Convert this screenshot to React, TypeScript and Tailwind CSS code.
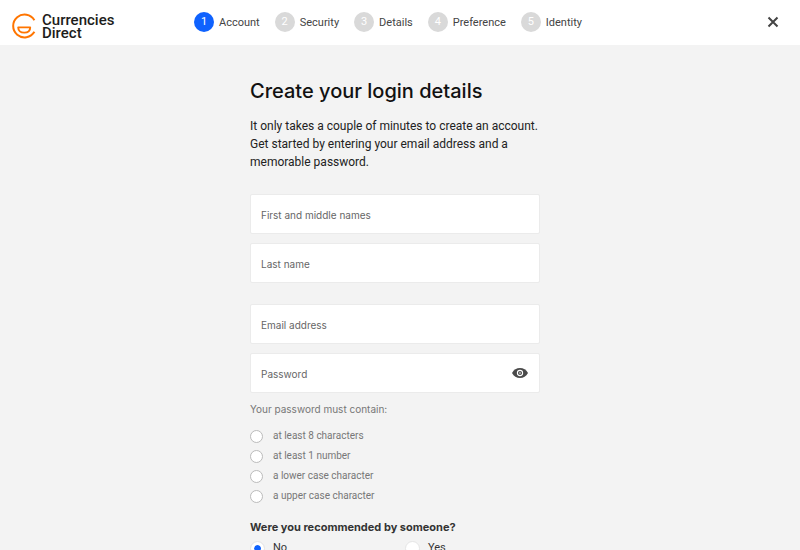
import { useState } from "react";
import clsx from "clsx";

const steps = ["Account", "Security", "Details", "Preference", "Identity"];

const passwordRules = [
  "at least 8 characters",
  "at least 1 number",
  "a lower case character",
  "a upper case character",
];

function Logo() {
  return (
    <a href="#" className="flex items-center gap-[6px] text-[#1d1d1b]">
      <svg width="24" height="26" viewBox="0 0 24 26" fill="none" stroke="#ff7500">
        <path d="M22.4 7.2A11.4 11.4 0 1 0 22.4 18.8" strokeWidth="2" />
        <path
          d="M6.2 14.4H18.2C18.2 17.6 15.8 19.6 12.2 19.6S6.2 17.6 6.2 14.4Z"
          strokeWidth="1.9"
          strokeLinejoin="round"
        />
      </svg>
      <span className="flex flex-col pt-[2px] text-[15px] leading-[13px] font-medium">
        <span>Currencies</span>
        <span>Direct</span>
      </span>
    </a>
  );
}

function Header() {
  return (
    <header className="flex h-[45px] items-center bg-white pr-[21px] pb-[2px] pl-3">
      <div className="w-[182px] pt-2">
        <Logo />
      </div>
      <ol className="flex flex-1 items-center gap-[15px]">
        {steps.map((step, i) => (
          <li key={step} className="flex items-center gap-[5px]">
            <span
              className={clsx(
                "flex size-5 items-center justify-center rounded-full pt-px text-[11px] text-white",
                i === 0 ? "bg-[#0f62fe]" : "bg-[#d9d9d9]"
              )}
            >
              {i + 1}
            </span>
            <span className="pt-[3px] text-[11px] text-[#444]">{step}</span>
          </li>
        ))}
      </ol>
      <button type="button" aria-label="Close">
        <svg width="12" height="12" viewBox="0 0 12 12" stroke="#444" strokeWidth="2">
          <path d="M1.5 1.5L10.5 10.5M10.5 1.5L1.5 10.5" />
        </svg>
      </button>
    </header>
  );
}

function Field({ label, type = "text" }: { label: string; type?: string }) {
  return (
    <input
      type={type}
      aria-label={label}
      placeholder={label}
      className="h-10 w-full rounded-xs border border-[#ebebeb] bg-white px-[10px] pt-[2px] font-['Inter','Liberation_Sans',sans-serif] text-[10px] text-[#333] outline-none placeholder:text-[#666]"
    />
  );
}

export default function App() {
  const [showPassword, setShowPassword] = useState(false);
  const [recommended, setRecommended] = useState("No");

  return (
    <div className="min-h-screen bg-[#f3f3f3] font-['Roboto','Liberation_Sans',sans-serif]">
      <Header />
      <main className="px-4 pt-8 pr-[26px] pb-10">
        <form className="mx-auto max-w-[290px]">
          <h1 className="font-['Inter','Liberation_Sans',sans-serif] text-xl leading-7 font-medium text-[#111]">
            Create your login details
          </h1>
          <p className="mt-3 text-xs leading-[18px] text-[#222]">
            It only takes a couple of minutes to create an account. Get started
            by entering your email address and a memorable password.
          </p>

          <div className="mt-[23px] flex flex-col gap-[9px]">
            <Field label="First and middle names" />
            <Field label="Last name" />
          </div>
          <div className="mt-[21px] flex flex-col gap-[9px]">
            <Field label="Email address" type="email" />
            <div className="relative">
              <Field label="Password" type={showPassword ? "text" : "password"} />
              <button
                type="button"
                aria-label="Show password"
                className="absolute inset-y-0 right-3 flex items-center"
                onClick={() => setShowPassword(!showPassword)}
              >
                <svg width="16" height="10" viewBox="0 0 16 10">
                  <path d="M0 5C1.8 1.8 4.6 0 8 0S14.2 1.8 16 5C14.2 8.2 11.4 10 8 10S1.8 8.2 0 5Z" fill="#4a4a4a" />
                  <circle cx="8" cy="5" r="2.6" fill="#4a4a4a" stroke="#fff" strokeWidth="1.1" />
                  <circle cx="8" cy="5" r="0.8" fill="#fff" />
                </svg>
              </button>
            </div>
          </div>

          <p className="mt-[7px] font-['Inter','Liberation_Sans',sans-serif] text-[10px] leading-[18px] text-[#777]">
            Your password must contain:
          </p>
          <ul className="mt-2">
            {passwordRules.map((rule) => (
              <li key={rule}>
                <label className="flex h-5 items-center gap-[10px] text-[10px] text-[#777]">
                  <input
                    type="checkbox"
                    className="size-[13px] appearance-none rounded-full border border-[#bbb] bg-white checked:bg-[#0f62fe]"
                  />
                  <span className="pb-[2px]">{rule}</span>
                </label>
              </li>
            ))}
          </ul>

          <fieldset className="mt-3">
            <legend className="font-['Inter','Liberation_Sans',sans-serif] text-[11px] leading-[18px] font-bold text-[#333]">
              Were you recommended by someone?
            </legend>
            <div className="mt-1 grid grid-cols-[155px_1fr]">
              {["No", "Yes"].map((answer) => (
                <label key={answer} className="flex items-center gap-2 text-[11px] text-[#333]">
                  <input
                    type="radio"
                    name="recommended"
                    checked={recommended === answer}
                    onChange={() => setRecommended(answer)}
                    className="size-[15px] appearance-none rounded-full border border-[#e5e5e5] bg-white checked:bg-[#0f62fe] checked:bg-clip-content checked:p-[3px] checked:shadow-[inset_0_0_0_3px_white]"
                  />
                  <span>{answer}</span>
                </label>
              ))}
            </div>
          </fieldset>
        </form>
      </main>
    </div>
  );
}
